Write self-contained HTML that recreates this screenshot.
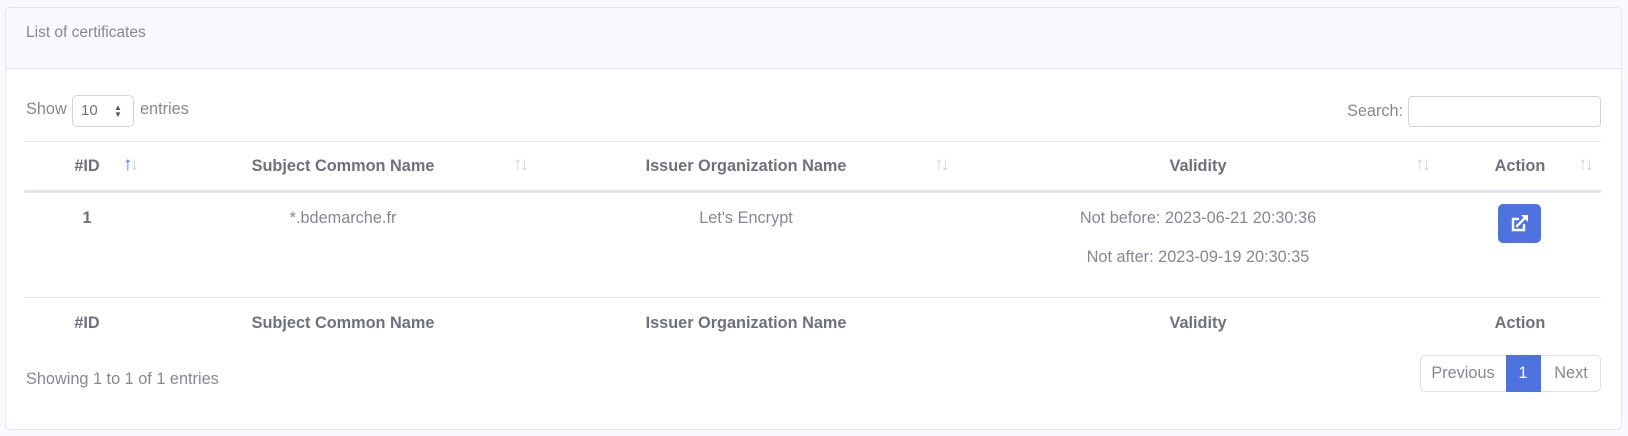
<!DOCTYPE html><html><head><meta charset="utf-8"><style>
*{box-sizing:border-box;margin:0;padding:0}
body{width:1628px;height:436px;background:#f8f9fc;font-family:"Liberation Sans",sans-serif;color:#858796;font-size:16.3px;position:relative;overflow:hidden}
.card{position:absolute;left:5px;top:7px;width:1617px;height:423px;background:#fff;border:1px solid #e3e6f0;border-radius:5px}
.hd{position:absolute;left:0;top:0;right:0;height:61px;background:#f8f9fc;border-bottom:1px solid #e3e6f0;border-radius:5px 5px 0 0}
.a{position:absolute;white-space:nowrap}
.c{position:absolute;white-space:nowrap;transform:translateX(-50%)}
.b{font-weight:bold;color:#6e707e}
.line{position:absolute;left:24px;width:1577px;height:1px;background:#e3e6f0}
.s{position:absolute;color:#d1d3e2;font-size:19px;letter-spacing:-3px}
</style></head><body>
<div class="card"><div class="hd"></div></div>
<div class="a" style="left:26px;top:24px;font-size:15.5px">List of certificates</div>
<div class="a" style="left:26px;top:100px">Show</div>
<div class="a" style="left:72px;top:95px;width:62px;height:32px;border:1px solid #d1d3e2;border-radius:5px"></div>
<div class="a" style="left:81px;top:102px;color:#6e707e;font-size:15px">10</div>
<div class="a" style="left:114px;top:104px;font-size:8px;line-height:7px;color:#555">▲<br>▼</div>
<div class="a" style="left:140px;top:100px">entries</div>
<div class="a" style="left:1347px;top:102px">Search:</div>
<div class="a" style="left:1408px;top:96px;width:193px;height:31px;border:1px solid #d1d3e2;border-radius:4px"></div>
<div class="line" style="top:141px"></div>
<div class="c b" style="left:87px;top:157px">#ID</div>
<div class="c b" style="left:343px;top:157px">Subject Common Name</div>
<div class="c b" style="left:746px;top:157px">Issuer Organization Name</div>
<div class="c b" style="left:1198px;top:157px">Validity</div>
<div class="c b" style="left:1520px;top:157px">Action</div>
<div class="s" style="left:123px;top:154px"><span style="color:#4e73df">↑</span>↓</div>
<div class="s" style="left:513px;top:154px">↑↓</div>
<div class="s" style="left:934px;top:154px">↑↓</div>
<div class="s" style="left:1415px;top:154px">↑↓</div>
<div class="s" style="left:1578px;top:154px">↑↓</div>
<div class="line" style="top:190px;height:3px"></div>
<div class="c b" style="left:87px;top:209px">1</div>
<div class="c" style="left:343px;top:209px">*.bdemarche.fr</div>
<div class="c" style="left:746px;top:209px">Let's Encrypt</div>
<div class="c" style="left:1198px;top:209px">Not before: 2023-06-21 20:30:36</div>
<div class="c" style="left:1198px;top:248px">Not after: 2023-09-19 20:30:35</div>
<div class="a" style="left:1498px;top:204px;width:43px;height:39px;background:#4e73df;border-radius:5px">
<svg width="43" height="39" viewBox="0 0 43 39"><g fill="none" stroke="#fff" stroke-width="2.4" stroke-linecap="round"><path d="M20 15h-5v11h11v-5"/><path d="M19 22l9-9"/></g><path d="M23 11h7v7z" fill="#fff"/></svg></div>
<div class="line" style="top:297px"></div>
<div class="c b" style="left:87px;top:314px">#ID</div>
<div class="c b" style="left:343px;top:314px">Subject Common Name</div>
<div class="c b" style="left:746px;top:314px">Issuer Organization Name</div>
<div class="c b" style="left:1198px;top:314px">Validity</div>
<div class="c b" style="left:1520px;top:314px">Action</div>
<div class="a" style="left:26px;top:370px">Showing 1 to 1 of 1 entries</div>
<div class="a" style="left:1420px;top:355px;width:181px;height:37px;border:1px solid #dddfeb;border-radius:5px"></div>
<div class="a" style="left:1506px;top:355px;width:35px;height:37px;background:#4e73df"></div>
<div class="c" style="left:1463px;top:364px">Previous</div>
<div class="c" style="left:1523px;top:364px;color:#fff">1</div>
<div class="c" style="left:1571px;top:364px">Next</div>
</body></html>
